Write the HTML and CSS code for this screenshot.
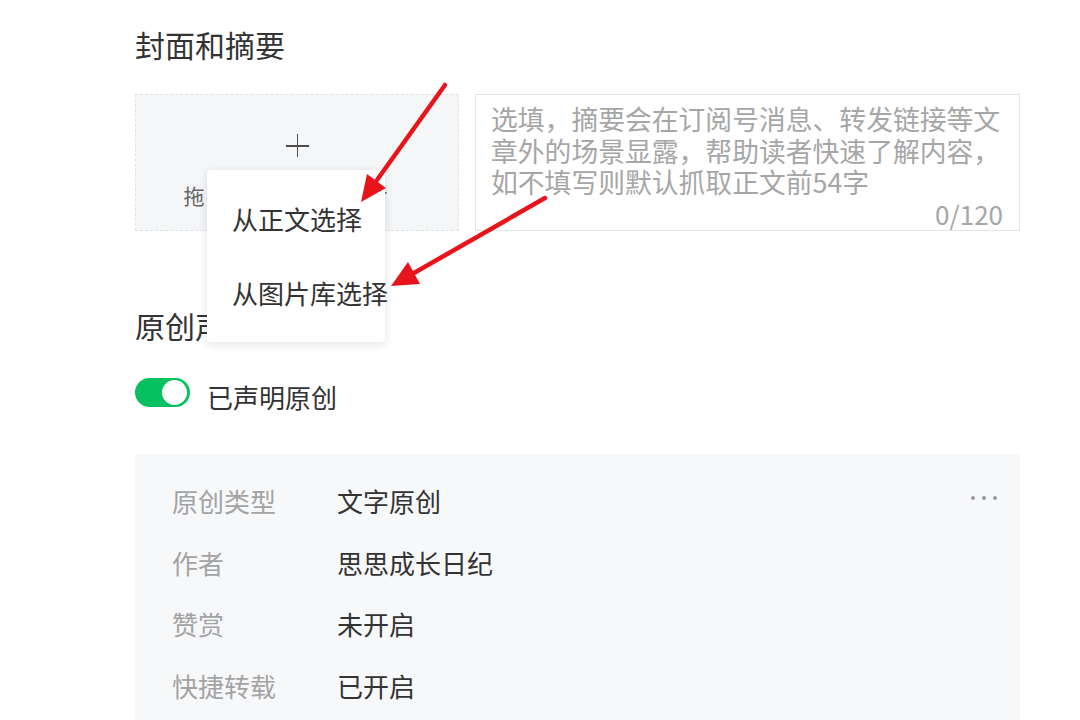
FILE: index.html
```html
<!DOCTYPE html>
<html lang="zh-CN">
<head>
<meta charset="utf-8">
<title>封面和摘要</title>
<link rel="stylesheet" href="styles.css">
</head>
<body>
<div class="page">
  <section class="sec">
    <h2 class="sec-title">封面和摘要</h2>
    <div class="cover-row">
      <div class="cover">
        <span class="plus"></span>
        <span class="cover-hint">拖拽或选择封面图片</span>
        <ul class="menu">
          <li class="menu-item">从正文选择</li>
          <li class="menu-item">从图片库选择</li>
        </ul>
      </div>
      <div class="summary">
        <p class="placeholder">选填，摘要会在订阅号消息、转发链接等文章外的场景显露，帮助读者快速了解内容，如不填写则默认抓取正文前54字</p>
        <span class="count">0/120</span>
      </div>
    </div>
  </section>

  <section class="sec sec-original">
    <h2 class="sec-title">原创声明</h2>
    <div class="switch-row">
      <span class="switch"><span class="knob"></span></span>
      <span class="switch-label">已声明原创</span>
    </div>
    <div class="panel">
      <div class="row">
        <span class="label">原创类型</span>
        <span class="value">文字原创</span>
        <span class="more"><i></i><i></i><i></i></span>
      </div>
      <div class="row">
        <span class="label">作者</span>
        <span class="value">思思成长日纪</span>
      </div>
      <div class="row">
        <span class="label">赞赏</span>
        <span class="value">未开启</span>
      </div>
      <div class="row">
        <span class="label">快捷转载</span>
        <span class="value">已开启</span>
      </div>
    </div>
  </section>

  <svg class="arrows" width="1080" height="720" viewBox="0 0 1080 720">
    <line x1="445" y1="85" x2="377" y2="180" stroke="#e8141b" stroke-width="4.5" stroke-linecap="round"/>
    <polygon points="361,202 386,188 367,174" fill="#e8141b"/>
    <line x1="545" y1="198" x2="414" y2="273" stroke="#e8141b" stroke-width="4.5" stroke-linecap="round"/>
    <polygon points="391,286 420,284 408,262" fill="#e8141b"/>
  </svg>
</div>
</body>
</html>
```

FILE: styles.css
```css
* { box-sizing: border-box; }

html, body {
  margin: 0;
  padding: 0;
  background: #ffffff;
}

body {
  font-family: "Noto Sans CJK SC", "Noto Sans", sans-serif;
  color: #333333;
  overflow: hidden;
}

.page {
  position: relative;
  width: 1080px;
  height: 720px;
  padding: 23px 60px 0 135px;
}

.sec-title {
  margin: 0;
  font-size: 30px;
  font-weight: 400;
  line-height: 42px;
  color: #333333;
}

.cover-row {
  display: flex;
  gap: 16px;
  margin-top: 29px;
  width: 885px;
}

.cover {
  position: relative;
  width: 324px;
  height: 137px;
  background: #f5f6f7;
  border: 1px dashed #e1e2e4;
  display: flex;
  flex-direction: column;
  align-items: center;
  padding-top: 39px;
}

.plus {
  position: relative;
  width: 23px;
  height: 23px;
}
.plus::before,
.plus::after {
  content: "";
  position: absolute;
  background: #4d4d4d;
}
.plus::before {
  left: 0;
  right: 0;
  top: 11px;
  height: 1.5px;
}
.plus::after {
  top: 0;
  bottom: 0;
  left: 11px;
  width: 1.5px;
}

.cover-hint {
  margin-top: 24px;
  font-size: 21px;
  line-height: 28px;
  letter-spacing: 2px;
  color: #666666;
  margin-left: -20px;
  white-space: nowrap;
}

.menu {
  position: absolute;
  left: 71px;
  top: 75px;
  width: 178px;
  margin: 0;
  padding: 12px 0;
  list-style: none;
  background: #ffffff;
  border-radius: 4px;
  box-shadow: 0 2px 10px rgba(0, 0, 0, 0.12);
}

.menu-item {
  height: 74px;
  line-height: 74px;
  padding-left: 25px;
  font-size: 26px;
  color: #333333;
  white-space: nowrap;
}

.summary {
  width: 545px;
  height: 137px;
  border: 1px solid #e4e4e4;
  background: #ffffff;
  padding: 8px 16px 0 15px;
  display: flex;
  flex-direction: column;
}

.placeholder {
  margin: 0;
  font-size: 26.8px;
  line-height: 31.5px;
  color: #a6a6a6;
  letter-spacing: 0;
}

.count {
  align-self: flex-end;
  margin-top: auto;
  margin-bottom: 4px;
  font-size: 26px;
  line-height: 24px;
  color: #a6a6a6;
}

.sec-original {
  margin-top: 73px;
}

.switch-row {
  display: flex;
  align-items: flex-start;
  gap: 17px;
  margin-top: 32px;
}

.switch {
  position: relative;
  width: 55px;
  height: 29px;
  border-radius: 15px;
  background: #07c160;
  flex: none;
}

.knob {
  position: absolute;
  right: 3px;
  top: 2px;
  width: 25px;
  height: 25px;
  border-radius: 50%;
  background: #ffffff;
}

.switch-label {
  font-size: 26px;
  line-height: 30px;
  margin-top: 4px;
  color: #333333;
}

.panel {
  margin-top: 42px;
  width: 885px;
  height: 290px;
  background: #f7f8fa;
  padding: 16px 23px 0 37px;
}

.row {
  display: flex;
  align-items: center;
  height: 61.6px;
  font-size: 26px;
}

.label {
  width: 165px;
  color: #a3a3a3;
  flex: none;
}

.value {
  color: #333333;
}

.more {
  margin-left: auto;
  display: flex;
  gap: 7px;
  align-self: flex-start;
  margin-top: 26px;
}
.more i {
  display: block;
  width: 4px;
  height: 4px;
  border-radius: 50%;
  background: #9a9a9a;
}

.arrows {
  position: absolute;
  left: 0;
  top: 0;
  pointer-events: none;
}
```
